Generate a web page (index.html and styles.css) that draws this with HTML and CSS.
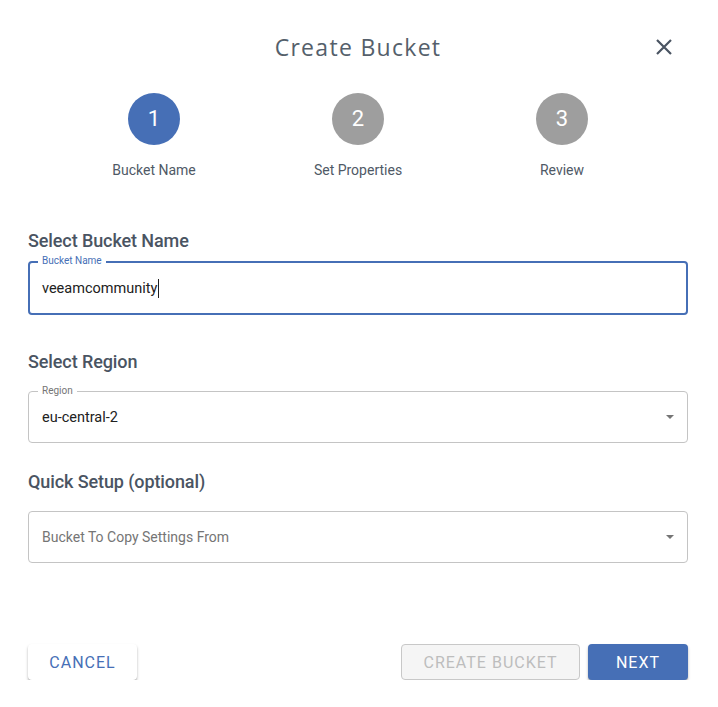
FILE: index.html
```html
<!DOCTYPE html>
<html lang="en">
<head>
    <meta charset="UTF-8">
    <meta name="viewport" content="width=device-width, initial-scale=1.0">
    <title>Create Bucket</title>
    <link rel="stylesheet" href="styles.css">
</head>
<body>
    <div class="dialog">
        <!-- Header -->
        <div class="header">
            <span></span>
            <h1>Create Bucket</h1>
            <button class="close" type="button" aria-label="Close">
                <svg width="20" height="20" viewBox="0 0 20 20">
                    <path d="M3 3 L17 17 M17 3 L3 17" stroke="#4a5462" stroke-width="2.2" fill="none"/>
                </svg>
            </button>
        </div>

        <!-- Stepper -->
        <div class="steps">
            <div class="step">
                <div class="circle active">1</div>
                <div class="step-label">Bucket Name</div>
            </div>
            <div class="step">
                <div class="circle">2</div>
                <div class="step-label">Set Properties</div>
            </div>
            <div class="step">
                <div class="circle">3</div>
                <div class="step-label">Review</div>
            </div>
        </div>

        <!-- Form -->
        <div class="section first">
            <h2>Select Bucket Name</h2>
            <div class="field focused">
                <span class="field-label">Bucket Name</span>
                <span class="value">veeamcommunity</span><span class="caret"></span>
            </div>
        </div>

        <div class="section">
            <h2>Select Region</h2>
            <div class="field">
                <span class="field-label">Region</span>
                <span class="value">eu-central-2</span>
                <span class="arrow"></span>
            </div>
        </div>

        <div class="section">
            <h2>Quick Setup (optional)</h2>
            <div class="field">
                <span class="placeholder">Bucket To Copy Settings From</span>
                <span class="arrow"></span>
            </div>
        </div>

        <!-- Actions -->
        <div class="actions">
            <button type="button" class="btn btn-cancel">Cancel</button>
            <div class="actions-right">
                <button type="button" class="btn btn-disabled" disabled>Create Bucket</button>
                <button type="button" class="btn btn-primary">Next</button>
            </div>
        </div>
    </div>
</body>
</html>
```

FILE: styles.css
```css
body {
    margin: 0;
    background: #fff;
    font-family: Roboto, "Liberation Sans", sans-serif;
    color: #4a5462;
}
.dialog {
    padding: 32px 30px 0 28px;
}
.header {
    display: grid;
    grid-template-columns: 1fr auto 1fr;
    align-items: center;
    height: 30px;
}
h1 {
    margin: 0;
    font-family: "Open Sans", sans-serif;
    font-weight: 400;
    font-size: 23px;
    line-height: 30px;
    color: #555f6b;
    letter-spacing: 1.3px;
}
.close {
    justify-self: end;
    margin-right: 14px;
    padding: 0;
    border: none;
    background: none;
    width: 20px;
    height: 20px;
    cursor: pointer;
}
.steps {
    display: grid;
    grid-template-columns: repeat(3, 1fr);
    margin: 31px 24px 0;
}
.step {
    display: flex;
    flex-direction: column;
    align-items: center;
}
.circle {
    width: 52px;
    height: 52px;
    border-radius: 50%;
    background: #9e9e9e;
    color: #fff;
    font-size: 22px;
    line-height: 52px;
    text-align: center;
}
.circle.active {
    background: #466fb6;
}
.step-label {
    margin-top: 15px;
    font-size: 14px;
    line-height: 20px;
    color: #4f5966;
}
.section {
    margin-top: 29px;
}
.section.first {
    margin-top: 51px;
}
.section.first + .section {
    margin-top: 37px;
}
h2 {
    margin: 0 0 19px;
    font-size: 18px;
    font-weight: 500;
    line-height: 20px;
    color: #4a5462;
    letter-spacing: -0.1px;
}
.first h2 {
    margin-bottom: 10px;
}
.field {
    position: relative;
    box-sizing: border-box;
    height: 52px;
    border: 1px solid #c4c4c4;
    border-radius: 4px;
    padding: 0 13px;
    display: flex;
    align-items: center;
    font-size: 14.5px;
    color: #212121;
}
.field.focused {
    height: 54px;
    border: 2px solid #466fb6;
    padding: 0 12px;
}
.field-label {
    position: absolute;
    top: -7px;
    left: 9px;
    padding: 0 4px;
    background: #fff;
    font-size: 10px;
    line-height: 12px;
    color: #757575;
}
.focused .field-label {
    top: -8px;
    left: 8px;
    color: #466fb6;
}
.caret {
    display: inline-block;
    width: 1px;
    height: 19px;
    background: #212121;
    margin-left: 1px;
}
.placeholder {
    color: #757575;
    font-size: 14px;
}
.arrow {
    margin-left: auto;
    margin-right: 0;
    width: 0;
    height: 0;
    border-left: 4px solid transparent;
    border-right: 4px solid transparent;
    border-top: 4px solid #757575;
}
.actions {
    display: flex;
    justify-content: space-between;
    align-items: center;
    margin-top: 81px;
}
.actions-right {
    display: flex;
    gap: 8px;
}
.btn {
    height: 36px;
    border: none;
    border-radius: 4px;
    font-family: Roboto, sans-serif;
    font-size: 16px;
    letter-spacing: 1px;
    text-transform: uppercase;
    cursor: pointer;
}
.btn-cancel {
    width: 109px;
    background: #fff;
    color: #466fb6;
    box-shadow: 0 2px 3px rgba(0,0,0,0.25), 0 1px 1px rgba(0,0,0,0.12);
}
.btn-disabled {
    width: 179px;
    background: #f5f5f5;
    border: 1px solid #c8c8c8;
    color: #bdbdbd;
    cursor: default;
}
.btn-primary {
    width: 100px;
    background: #466fb6;
    color: #fff;
    box-shadow: 0 2px 3px rgba(0,0,0,0.25), 0 1px 1px rgba(0,0,0,0.12);
}
```
